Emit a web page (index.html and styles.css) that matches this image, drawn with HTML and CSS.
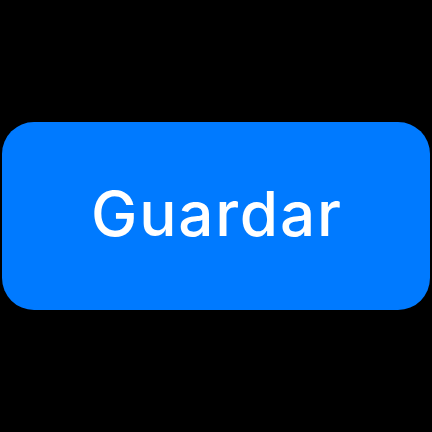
FILE: index.html
```html
<!DOCTYPE html>
<html lang="es">
<head>
<meta charset="utf-8">
<link rel="stylesheet" href="styles.css">
</head>
<body>
<main class="stage">
  <button class="btn" type="button"><span class="label">Guardar</span></button>
</main>
</body>
</html>
```

FILE: styles.css
```css
html, body {
  margin: 0;
  padding: 0;
  background: #000;
}
.stage {
  width: 432px;
  height: 432px;
  display: flex;
  align-items: center;
  justify-content: center;
}
.btn {
  width: 428px;
  height: 188px;
  border: 0;
  border-radius: 32px;
  background: #007aff;
  color: #fff;
  font-family: Inter, "Liberation Sans", sans-serif;
  font-weight: 500;
  font-size: 62px;
  letter-spacing: 1.8px;
  display: flex;
  align-items: center;
  justify-content: center;
  padding: 0;
}
.label {
  margin-right: -1.8px;
  margin-top: -6px;
}
```
